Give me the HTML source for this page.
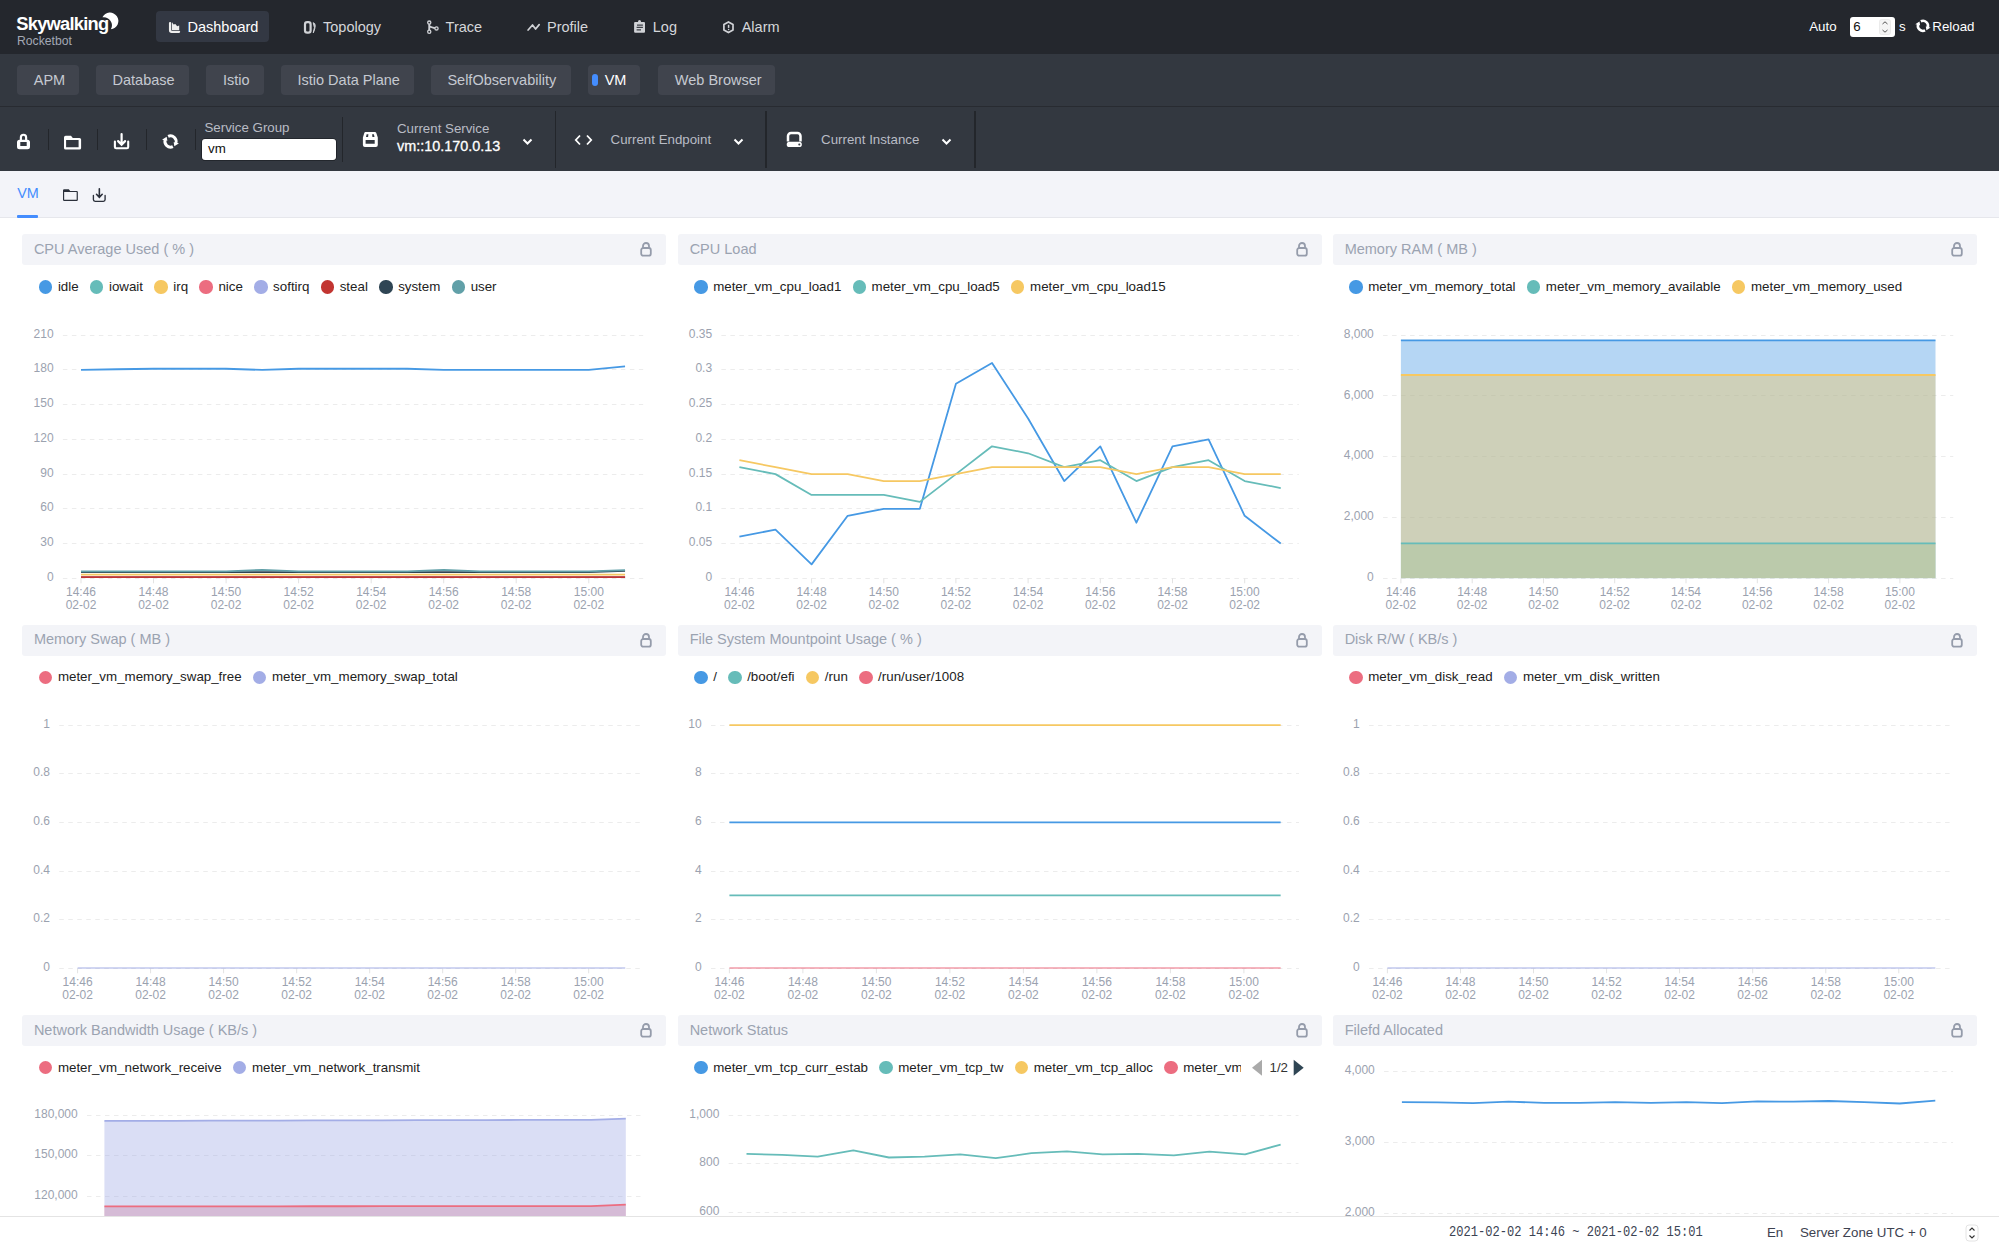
<!DOCTYPE html>
<html><head><meta charset="utf-8"><title>Skywalking Rocketbot</title>
<style>
html,body{margin:0;padding:0;}
body{width:1999px;height:1249px;overflow:hidden;position:relative;background:#ffffff;font-family:"Liberation Sans",sans-serif;}
.r{position:absolute;display:block;}
.t{position:absolute;white-space:nowrap;}
.lg{position:absolute;height:16px;display:flex;align-items:center;white-space:nowrap;font-size:13.33px;color:#222;}
.li{display:inline-flex;align-items:center;margin-right:11.4px;line-height:16px;}
.li i{display:inline-block;width:13.3px;height:13.3px;border-radius:50%;margin-right:5.6px;}
</style></head><body>
<div class="r" style="left:0px;top:0px;width:1999px;height:54px;background:#24272d;"></div>
<div class="t" style="left:16.30px;top:15.31px;font-size:18.3px;line-height:18.3px;color:#ffffff;font-weight:700;font-family:'Liberation Sans', sans-serif;letter-spacing:-0.75px;">Skywalking</div>
<svg class="r" style="left:0px;top:0px;" width="130" height="40" viewBox="0 0 130 40"><path d="M102.45 17.32 A8.4 8.4 0 1 1 110.88 29.35 A8.19 8.19 0 0 0 102.45 17.32 Z" fill="#fff"/></svg>
<div class="t" style="left:17.00px;top:35.17px;font-size:12.2px;line-height:12.2px;color:#a3a8b4;font-weight:400;font-family:'Liberation Sans', sans-serif;">Rocketbot</div>
<div class="r" style="left:156px;top:11px;width:113px;height:31px;background:#333843;border-radius:4px;"></div>
<svg class="r" style="left:160px;top:14px;" width="40" height="26" viewBox="0 0 40 26"><path d="M10.1 9.05 V16.3 Q10.1 17.8 11.6 17.8 H19.05" stroke="#eeeeee" stroke-width="2.3" fill="none" stroke-linecap="round"/><path d="M12 8.2 L13.6 10.5 L15.3 9.9 L17.2 12.3 L19.2 11.6 V16 H12 Z" fill="#eeeeee"/></svg>
<div class="t" style="left:187.50px;top:20.23px;font-size:14.5px;line-height:14.5px;color:#ffffff;font-weight:400;font-family:'Liberation Sans', sans-serif;">Dashboard</div>
<svg class="r" style="left:296px;top:14px;" width="40" height="26" viewBox="0 0 40 26"><rect x="9" y="8.2" width="5.6" height="10.5" rx="2.2" stroke="#d0d2d6" stroke-width="2.2" fill="none"/><path d="M17.2 8.7 Q21.2 9.5 17.3 18.8 Q19.6 13.5 17.2 8.7 Z" fill="#d0d2d6" stroke="#d0d2d6" stroke-width="1" stroke-linejoin="round"/></svg>
<div class="t" style="left:323.00px;top:20.23px;font-size:14.5px;line-height:14.5px;color:#d4d6da;font-weight:400;font-family:'Liberation Sans', sans-serif;">Topology</div>
<svg class="r" style="left:418px;top:14px;" width="40" height="26" viewBox="0 0 40 26"><path d="M11.25 8.5 V17.7 M11.4 12.2 Q12.5 13.4 18.5 14.4" stroke="#d0d2d6" stroke-width="1.9" fill="none"/><circle cx="11.25" cy="8.6" r="1.6" fill="#2a2d33" stroke="#d0d2d6" stroke-width="1.3"/><circle cx="11.25" cy="17.7" r="1.6" fill="#2a2d33" stroke="#d0d2d6" stroke-width="1.3"/><circle cx="18.5" cy="14.4" r="1.6" fill="#2a2d33" stroke="#d0d2d6" stroke-width="1.3"/></svg>
<div class="t" style="left:445.60px;top:20.23px;font-size:14.5px;line-height:14.5px;color:#d4d6da;font-weight:400;font-family:'Liberation Sans', sans-serif;">Trace</div>
<svg class="r" style="left:520px;top:14px;" width="40" height="26" viewBox="0 0 40 26"><path d="M8.1 16 L12.5 11 L15.6 15 L19.2 10.6" stroke="#d0d2d6" stroke-width="1.7" fill="none" stroke-linecap="round" stroke-linejoin="round"/></svg>
<div class="t" style="left:547.00px;top:20.23px;font-size:14.5px;line-height:14.5px;color:#d4d6da;font-weight:400;font-family:'Liberation Sans', sans-serif;">Profile</div>
<svg class="r" style="left:626px;top:14px;" width="40" height="26" viewBox="0 0 40 26"><rect x="8.1" y="7.9" width="10.9" height="10.85" rx="1.1" fill="#d0d2d6"/><circle cx="13.5" cy="7.6" r="1.5" fill="#d0d2d6"/><path d="M11 11.05 H16.9 M10.6 13.45 H16.9 M10.6 15.85 H15" stroke="#3b3e45" stroke-width="1.2"/></svg>
<div class="t" style="left:652.80px;top:20.23px;font-size:14.5px;line-height:14.5px;color:#d4d6da;font-weight:400;font-family:'Liberation Sans', sans-serif;">Log</div>
<svg class="r" style="left:715px;top:14px;" width="40" height="26" viewBox="0 0 40 26"><path d="M13.45 7.9 L18 10.5 V15.9 L13.45 18.6 L8.9 15.9 V10.5 Z" stroke="#d0d2d6" stroke-width="1.7" fill="none" stroke-linejoin="round"/><path d="M13.6 10.8 V13.9" stroke="#d0d2d6" stroke-width="1.5"/><circle cx="13.6" cy="15.4" r="0.75" fill="#d0d2d6"/></svg>
<div class="t" style="left:741.70px;top:20.23px;font-size:14.5px;line-height:14.5px;color:#d4d6da;font-weight:400;font-family:'Liberation Sans', sans-serif;">Alarm</div>
<div class="t" style="left:1809.20px;top:20.44px;font-size:13.3px;line-height:13.3px;color:#ffffff;font-weight:400;font-family:'Liberation Sans', sans-serif;">Auto</div>
<div class="r" style="left:1850.3px;top:16.75px;width:45px;height:20px;background:#ffffff;border-radius:3px;"></div>
<div class="t" style="left:1853.30px;top:20.24px;font-size:13.3px;line-height:13.3px;color:#111111;font-weight:400;font-family:'Liberation Sans', sans-serif;">6</div>
<svg class="r" style="left:1879px;top:19px;" width="12" height="16" viewBox="0 0 12 16"><rect x="0.5" y="0.5" width="11" height="15" rx="2" fill="#f4f4f4" stroke="#e0e0e0" stroke-width="0.6"/><path d="M3.5 5 L6 2.8 L8.5 5" stroke="#555" stroke-width="1" fill="none"/><path d="M3.5 11 L6 13.2 L8.5 11" stroke="#555" stroke-width="1" fill="none"/></svg>
<div class="t" style="left:1899.00px;top:20.44px;font-size:13.3px;line-height:13.3px;color:#ffffff;font-weight:400;font-family:'Liberation Sans', sans-serif;">s</div>
<svg class="r" style="left:1908.5px;top:11.4px" width="27" height="27" viewBox="0 0 30 30"><path d="M13.13 11.42 A5.6 5.6 0 0 1 20.76 18.42" stroke="#fff" stroke-width="2.9" fill="none"/><path d="M17.87 21.58 A5.6 5.6 0 0 1 10.24 14.58" stroke="#fff" stroke-width="2.9" fill="none"/><path d="M18.63 17.17 L24.0 18.25 L19.38 21.31 Z" fill="#fff"/><path d="M12.37 15.83 L7.0 14.75 L11.62 11.69 Z" fill="#fff"/></svg>
<div class="t" style="left:1932.30px;top:20.44px;font-size:13.3px;line-height:13.3px;color:#ffffff;font-weight:400;font-family:'Liberation Sans', sans-serif;">Reload</div>
<div class="r" style="left:0px;top:54px;width:1999px;height:52px;background:#333840;"></div>
<div class="r" style="left:0px;top:106px;width:1999px;height:1px;background:#282b31;"></div>
<div class="r" style="left:17px;top:65.2px;width:62px;height:29.4px;background:#40444d;border-radius:4px;"></div>
<div class="t" style="left:33.75px;top:73.03px;font-size:14.5px;line-height:14.5px;color:#c5c9d1;font-weight:400;font-family:'Liberation Sans', sans-serif;">APM</div>
<div class="r" style="left:96.25px;top:65.2px;width:93.0px;height:29.4px;background:#40444d;border-radius:4px;"></div>
<div class="t" style="left:112.50px;top:73.03px;font-size:14.5px;line-height:14.5px;color:#c5c9d1;font-weight:400;font-family:'Liberation Sans', sans-serif;">Database</div>
<div class="r" style="left:206.25px;top:65.2px;width:57.5px;height:29.4px;background:#40444d;border-radius:4px;"></div>
<div class="t" style="left:223.00px;top:73.03px;font-size:14.5px;line-height:14.5px;color:#c5c9d1;font-weight:400;font-family:'Liberation Sans', sans-serif;">Istio</div>
<div class="r" style="left:280.5px;top:65.2px;width:133.25px;height:29.4px;background:#40444d;border-radius:4px;"></div>
<div class="t" style="left:297.50px;top:73.03px;font-size:14.5px;line-height:14.5px;color:#c5c9d1;font-weight:400;font-family:'Liberation Sans', sans-serif;">Istio Data Plane</div>
<div class="r" style="left:431.25px;top:65.2px;width:139.75px;height:29.4px;background:#40444d;border-radius:4px;"></div>
<div class="t" style="left:447.40px;top:73.03px;font-size:14.5px;line-height:14.5px;color:#c5c9d1;font-weight:400;font-family:'Liberation Sans', sans-serif;">SelfObservability</div>
<div class="r" style="left:588.2px;top:65.2px;width:52.2px;height:29.4px;background:#40444d;border-radius:4px;"></div>
<div class="t" style="left:604.70px;top:73.03px;font-size:14.5px;line-height:14.5px;color:#ffffff;font-weight:400;font-family:'Liberation Sans', sans-serif;">VM</div>
<div class="r" style="left:657.8px;top:65.2px;width:117.7px;height:29.4px;background:#40444d;border-radius:4px;"></div>
<div class="t" style="left:674.80px;top:73.03px;font-size:14.5px;line-height:14.5px;color:#c5c9d1;font-weight:400;font-family:'Liberation Sans', sans-serif;">Web Browser</div>
<div class="r" style="left:592.2px;top:74.4px;width:6px;height:11.4px;background:#448dfe;border-radius:3px;"></div>
<div class="r" style="left:0px;top:107px;width:1999px;height:64.4px;background:#333840;"></div>
<svg class="r" style="left:8px;top:128px;" width="30" height="28" viewBox="0 0 30 28"><path fill-rule="evenodd" fill="#ffffff" d="M11.5 11.66 H19.5 A2.5 2.5 0 0 1 22 14.16 V18.8 A2.5 2.5 0 0 1 19.5 21.3 H11.5 A2.5 2.5 0 0 1 9 18.8 V14.16 A2.5 2.5 0 0 1 11.5 11.66 Z M12.3 13.9 V17.9 H18.7 V13.9 Z"/><path fill="#ffffff" d="M11.8 11.9 V9.4 A3.7 3.7 0 0 1 19.2 9.4 V11.9 H17.05 V9.4 A1.55 1.55 0 0 0 13.95 9.4 V11.9 Z"/></svg>
<div class="r" style="left:47.5px;top:129px;width:1.5px;height:20.5px;background:#23262b;"></div>
<div class="r" style="left:96.5px;top:129px;width:1.5px;height:20.5px;background:#23262b;"></div>
<div class="r" style="left:145.5px;top:129px;width:1.5px;height:20.5px;background:#23262b;"></div>
<div class="r" style="left:194.5px;top:129px;width:1.5px;height:20.5px;background:#23262b;"></div>
<svg class="r" style="left:58px;top:128px;" width="30" height="28" viewBox="0 0 30 28"><path fill-rule="evenodd" fill="#ffffff" d="M6 9.5 Q6 7.85 7.6 7.85 H13 L14.8 9.9 H21.5 Q23.1 9.9 23.1 11.5 V19.9 Q23.1 21.5 21.5 21.5 H7.6 Q6 21.5 6 19.9 Z M8.1 12.1 V19.3 H20.6 V12.1 Z"/></svg>
<svg class="r" style="left:107px;top:128px;" width="30" height="28" viewBox="0 0 30 28"><path d="M14.6 6 V16 M11.1 13.1 L14.6 16.6 L18.1 13.1" stroke="#ffffff" stroke-width="2.2" fill="none" stroke-linecap="round"/><path d="M7.9 13.5 V19 Q7.9 20.2 9.1 20.2 H20 Q21.2 20.2 21.2 19 V13.5" stroke="#ffffff" stroke-width="2.1" fill="none" stroke-linecap="round"/></svg>
<svg class="r" style="left:155px;top:125px;" width="30" height="30" viewBox="0 0 30 30"><path d="M13.13 11.42 A5.6 5.6 0 0 1 20.76 18.42" stroke="#ffffff" stroke-width="2.9" fill="none"/><path d="M17.87 21.58 A5.6 5.6 0 0 1 10.24 14.58" stroke="#ffffff" stroke-width="2.9" fill="none"/><path d="M18.63 17.17 L24.0 18.25 L19.38 21.31 Z" fill="#ffffff"/><path d="M12.37 15.83 L7.0 14.75 L11.62 11.69 Z" fill="#ffffff"/></svg>
<div class="t" style="left:204.50px;top:120.54px;font-size:13.3px;line-height:13.3px;color:#b9bcc5;font-weight:400;font-family:'Liberation Sans', sans-serif;">Service Group</div>
<div class="r" style="left:201.8px;top:138.5px;width:134.2px;height:21.3px;background:#ffffff;border-radius:3px;box-shadow:0 0 0 0.6px #15171b;"></div>
<div class="t" style="left:208.00px;top:142.24px;font-size:13.3px;line-height:13.3px;color:#111111;font-weight:400;font-family:'Liberation Sans', sans-serif;">vm</div>
<div class="r" style="left:341.8px;top:117px;width:1.6px;height:44.7px;background:#23262b;"></div>
<svg class="r" style="left:355px;top:125px;" width="30" height="30" viewBox="0 0 30 30"><path fill-rule="evenodd" fill="#ffffff" d="M10.3 7 H19.9 Q20.9 7 21.3 8 L22.8 12.5 V20 Q22.8 22 20.8 22 H9.9 Q7.9 22 7.9 20 V12.5 L9.3 8 Q9.7 7 10.3 7 Z M11.6 9.3 H13.4 L13.1 12 H11 Z M17.1 9.3 H18.9 L19.5 12 H17.4 Z M10.6 14.9 V18.75 H19.7 V14.9 Z"/></svg>
<div class="t" style="left:397.00px;top:122.14px;font-size:13.3px;line-height:13.3px;color:#b9bcc5;font-weight:400;font-family:'Liberation Sans', sans-serif;">Current Service</div>
<div class="t" style="left:397.00px;top:138.51px;font-size:14.4px;line-height:14.4px;color:#ffffff;font-weight:400;font-family:'Liberation Sans', sans-serif;-webkit-text-stroke:0.3px #fff;">vm::10.170.0.13</div>
<svg class="r" style="left:522px;top:137.5px;" width="11" height="8" viewBox="0 0 11 8"><path d="M1.5 1.5 L5.5 5.5 L9.5 1.5" stroke="#ffffff" stroke-width="2" fill="none"/></svg>
<div class="r" style="left:554.6px;top:110.5px;width:1.6px;height:57.8px;background:#23262b;"></div>
<svg class="r" style="left:574px;top:133.5px;" width="19" height="12" viewBox="0 0 19 12"><path d="M6 1.5 L1.8 6 L6 10.5 M13 1.5 L17.2 6 L13 10.5" stroke="#ffffff" stroke-width="1.8" fill="none"/></svg>
<div class="t" style="left:610.60px;top:132.74px;font-size:13.3px;line-height:13.3px;color:#b9bcc5;font-weight:400;font-family:'Liberation Sans', sans-serif;">Current Endpoint</div>
<svg class="r" style="left:732.5px;top:137.5px;" width="11" height="8" viewBox="0 0 11 8"><path d="M1.5 1.5 L5.5 5.5 L9.5 1.5" stroke="#ffffff" stroke-width="2" fill="none"/></svg>
<div class="r" style="left:765.4px;top:110.5px;width:1.6px;height:57.8px;background:#23262b;"></div>
<svg class="r" style="left:778px;top:125px;" width="30" height="30" viewBox="0 0 30 30"><path d="M10 16.4 V11 A3.05 3.05 0 0 1 13.05 7.95 H19.45 A3.05 3.05 0 0 1 22.5 11 V16.4" stroke="#ffffff" stroke-width="2.5" fill="none"/><rect x="8.74" y="16.8" width="15.1" height="5.3" rx="2.65" fill="#ffffff"/><circle cx="21.3" cy="19.45" r="1.05" fill="#333840"/></svg>
<div class="t" style="left:821.10px;top:132.74px;font-size:13.3px;line-height:13.3px;color:#b9bcc5;font-weight:400;font-family:'Liberation Sans', sans-serif;">Current Instance</div>
<svg class="r" style="left:941px;top:137.5px;" width="11" height="8" viewBox="0 0 11 8"><path d="M1.5 1.5 L5.5 5.5 L9.5 1.5" stroke="#ffffff" stroke-width="2" fill="none"/></svg>
<div class="r" style="left:974px;top:110.5px;width:1.6px;height:57.8px;background:#23262b;"></div>
<div class="r" style="left:0px;top:171.4px;width:1999px;height:46.1px;background:#f3f4f9;"></div>
<div class="r" style="left:0px;top:217.3px;width:1999px;height:1px;background:#e6e7ec;"></div>
<div class="t" style="left:17.20px;top:186.11px;font-size:14.4px;line-height:14.4px;color:#448dfe;font-weight:400;font-family:'Liberation Sans', sans-serif;">VM</div>
<div class="r" style="left:17px;top:215px;width:21.3px;height:2.5px;background:#448dfe;border-radius:1px;"></div>
<svg class="r" style="left:58px;top:182px;" width="54" height="26" viewBox="0 0 54 26"><path fill-rule="evenodd" fill="#2b303b" d="M5 8.3 Q5 7.16 6.2 7.16 H10.8 L12.2 8.9 H18.7 Q19.86 8.9 19.86 10.1 V17.7 Q19.86 18.9 18.7 18.9 H6.2 Q5 18.9 5 17.7 Z M6.15 10 V17.8 H18.65 V10 Z"/><path d="M41.35 6.8 V15.2 M38.5 12.3 L41.35 15.3 L44.2 12.3" stroke="#2b303b" stroke-width="1.6" fill="none" stroke-linecap="round"/><path d="M35.4 13.4 V17.6 Q35.4 19.3 37.1 19.3 H45.4 Q47.1 19.3 47.1 17.6 V13.4" stroke="#2b303b" stroke-width="1.35" fill="none" stroke-linecap="round"/></svg>
<svg class="r" style="left:0;top:0;font-family:'Liberation Sans',sans-serif" width="1999" height="1249" viewBox="0 0 1999 1249">
<line x1="62.9" y1="578.5" x2="643.2" y2="578.5" stroke="#ececec" stroke-width="1" stroke-dasharray="4.5 4.5"/>
<text x="53.6" y="580.8" text-anchor="end" font-size="12" fill="#9ba2af">0</text>
<line x1="62.9" y1="543.5" x2="643.2" y2="543.5" stroke="#ececec" stroke-width="1" stroke-dasharray="4.5 4.5"/>
<text x="53.6" y="546.1" text-anchor="end" font-size="12" fill="#9ba2af">30</text>
<line x1="62.9" y1="508.5" x2="643.2" y2="508.5" stroke="#ececec" stroke-width="1" stroke-dasharray="4.5 4.5"/>
<text x="53.6" y="511.3" text-anchor="end" font-size="12" fill="#9ba2af">60</text>
<line x1="62.9" y1="474.5" x2="643.2" y2="474.5" stroke="#ececec" stroke-width="1" stroke-dasharray="4.5 4.5"/>
<text x="53.6" y="476.6" text-anchor="end" font-size="12" fill="#9ba2af">90</text>
<line x1="62.9" y1="439.5" x2="643.2" y2="439.5" stroke="#ececec" stroke-width="1" stroke-dasharray="4.5 4.5"/>
<text x="53.6" y="441.9" text-anchor="end" font-size="12" fill="#9ba2af">120</text>
<line x1="62.9" y1="404.5" x2="643.2" y2="404.5" stroke="#ececec" stroke-width="1" stroke-dasharray="4.5 4.5"/>
<text x="53.6" y="407.2" text-anchor="end" font-size="12" fill="#9ba2af">150</text>
<line x1="62.9" y1="369.5" x2="643.2" y2="369.5" stroke="#ececec" stroke-width="1" stroke-dasharray="4.5 4.5"/>
<text x="53.6" y="372.4" text-anchor="end" font-size="12" fill="#9ba2af">180</text>
<line x1="62.9" y1="335.5" x2="643.2" y2="335.5" stroke="#ececec" stroke-width="1" stroke-dasharray="4.5 4.5"/>
<text x="53.6" y="337.7" text-anchor="end" font-size="12" fill="#9ba2af">210</text>
<line x1="81.0" y1="578.3" x2="81.0" y2="583.3" stroke="#e3e3e3" stroke-width="1"/>
<text x="81.0" y="596.1" text-anchor="middle" font-size="12" fill="#9ba2af">14:46</text>
<text x="81.0" y="609.3" text-anchor="middle" font-size="12" fill="#9ba2af">02-02</text>
<line x1="153.5" y1="578.3" x2="153.5" y2="583.3" stroke="#e3e3e3" stroke-width="1"/>
<text x="153.5" y="596.1" text-anchor="middle" font-size="12" fill="#9ba2af">14:48</text>
<text x="153.5" y="609.3" text-anchor="middle" font-size="12" fill="#9ba2af">02-02</text>
<line x1="226.1" y1="578.3" x2="226.1" y2="583.3" stroke="#e3e3e3" stroke-width="1"/>
<text x="226.1" y="596.1" text-anchor="middle" font-size="12" fill="#9ba2af">14:50</text>
<text x="226.1" y="609.3" text-anchor="middle" font-size="12" fill="#9ba2af">02-02</text>
<line x1="298.6" y1="578.3" x2="298.6" y2="583.3" stroke="#e3e3e3" stroke-width="1"/>
<text x="298.6" y="596.1" text-anchor="middle" font-size="12" fill="#9ba2af">14:52</text>
<text x="298.6" y="609.3" text-anchor="middle" font-size="12" fill="#9ba2af">02-02</text>
<line x1="371.2" y1="578.3" x2="371.2" y2="583.3" stroke="#e3e3e3" stroke-width="1"/>
<text x="371.2" y="596.1" text-anchor="middle" font-size="12" fill="#9ba2af">14:54</text>
<text x="371.2" y="609.3" text-anchor="middle" font-size="12" fill="#9ba2af">02-02</text>
<line x1="443.7" y1="578.3" x2="443.7" y2="583.3" stroke="#e3e3e3" stroke-width="1"/>
<text x="443.7" y="596.1" text-anchor="middle" font-size="12" fill="#9ba2af">14:56</text>
<text x="443.7" y="609.3" text-anchor="middle" font-size="12" fill="#9ba2af">02-02</text>
<line x1="516.2" y1="578.3" x2="516.2" y2="583.3" stroke="#e3e3e3" stroke-width="1"/>
<text x="516.2" y="596.1" text-anchor="middle" font-size="12" fill="#9ba2af">14:58</text>
<text x="516.2" y="609.3" text-anchor="middle" font-size="12" fill="#9ba2af">02-02</text>
<line x1="588.8" y1="578.3" x2="588.8" y2="583.3" stroke="#e3e3e3" stroke-width="1"/>
<text x="588.8" y="596.1" text-anchor="middle" font-size="12" fill="#9ba2af">15:00</text>
<text x="588.8" y="609.3" text-anchor="middle" font-size="12" fill="#9ba2af">02-02</text>
<clipPath id="c81_578"><rect x="52.9" y="325.2" width="600.3" height="253.4"/></clipPath><g clip-path="url(#c81_578)">
<polyline points="81.00,369.93 117.27,369.23 153.54,368.77 189.81,368.77 226.08,368.77 262.35,369.93 298.62,368.77 334.89,368.77 371.16,368.77 407.43,368.77 443.70,369.93 479.97,369.93 516.24,369.93 552.51,369.93 588.78,369.93 625.05,366.46" fill="none" stroke="#4699e4" stroke-width="1.8" stroke-linejoin="round" stroke-linecap="butt"/>
<polyline points="81.00,577.14 117.27,577.14 153.54,577.14 189.81,577.14 226.08,577.14 262.35,577.14 298.62,577.14 334.89,577.14 371.16,577.14 407.43,577.14 443.70,577.14 479.97,577.14 516.24,577.14 552.51,577.14 588.78,577.14 625.05,577.14" fill="none" stroke="#66bcb9" stroke-width="1.8" stroke-linejoin="round" stroke-linecap="butt"/>
<polyline points="81.00,574.60 117.27,574.60 153.54,574.60 189.81,574.60 226.08,574.60 262.35,574.60 298.62,574.60 334.89,574.60 371.16,574.60 407.43,574.60 443.70,574.60 479.97,574.60 516.24,574.60 552.51,574.60 588.78,574.60 625.05,574.60" fill="none" stroke="#f6c862" stroke-width="1.8" stroke-linejoin="round" stroke-linecap="butt"/>
<polyline points="81.00,577.14 117.27,577.14 153.54,577.14 189.81,577.14 226.08,577.14 262.35,577.14 298.62,577.14 334.89,577.14 371.16,577.14 407.43,577.14 443.70,577.14 479.97,577.14 516.24,577.14 552.51,577.14 588.78,577.14 625.05,577.14" fill="none" stroke="#ec6d80" stroke-width="1.8" stroke-linejoin="round" stroke-linecap="butt"/>
<polyline points="81.00,577.14 117.27,577.14 153.54,577.14 189.81,577.14 226.08,577.14 262.35,577.14 298.62,577.14 334.89,577.14 371.16,577.14 407.43,577.14 443.70,577.14 479.97,577.14 516.24,577.14 552.51,577.14 588.78,577.14 625.05,577.14" fill="none" stroke="#a3ade6" stroke-width="1.8" stroke-linejoin="round" stroke-linecap="butt"/>
<polyline points="81.00,577.14 117.27,577.14 153.54,577.14 189.81,577.14 226.08,577.14 262.35,577.14 298.62,577.14 334.89,577.14 371.16,577.14 407.43,577.14 443.70,577.14 479.97,577.14 516.24,577.14 552.51,577.14 588.78,577.14 625.05,577.14" fill="none" stroke="#c23531" stroke-width="1.8" stroke-linejoin="round" stroke-linecap="butt"/>
<polyline points="81.00,572.05 117.27,572.05 153.54,572.05 189.81,572.05 226.08,572.05 262.35,572.05 298.62,572.05 334.89,572.05 371.16,572.05 407.43,572.05 443.70,572.05 479.97,572.05 516.24,572.05 552.51,572.05 588.78,572.05 625.05,570.89" fill="none" stroke="#2f4554" stroke-width="1.8" stroke-linejoin="round" stroke-linecap="butt"/>
<polyline points="81.00,571.35 117.27,571.35 153.54,571.35 189.81,571.35 226.08,571.35 262.35,569.85 298.62,571.35 334.89,571.35 371.16,571.35 407.43,571.35 443.70,569.85 479.97,571.35 516.24,571.35 552.51,571.35 588.78,571.35 625.05,570.20" fill="none" stroke="#61a0a8" stroke-width="1.8" stroke-linejoin="round" stroke-linecap="butt"/>
</g>
<line x1="721.4" y1="578.5" x2="1298.8" y2="578.5" stroke="#ececec" stroke-width="1" stroke-dasharray="4.5 4.5"/>
<text x="712.1" y="580.8" text-anchor="end" font-size="12" fill="#9ba2af">0</text>
<line x1="721.4" y1="543.5" x2="1298.8" y2="543.5" stroke="#ececec" stroke-width="1" stroke-dasharray="4.5 4.5"/>
<text x="712.1" y="546.1" text-anchor="end" font-size="12" fill="#9ba2af">0.05</text>
<line x1="721.4" y1="508.5" x2="1298.8" y2="508.5" stroke="#ececec" stroke-width="1" stroke-dasharray="4.5 4.5"/>
<text x="712.1" y="511.3" text-anchor="end" font-size="12" fill="#9ba2af">0.1</text>
<line x1="721.4" y1="474.5" x2="1298.8" y2="474.5" stroke="#ececec" stroke-width="1" stroke-dasharray="4.5 4.5"/>
<text x="712.1" y="476.6" text-anchor="end" font-size="12" fill="#9ba2af">0.15</text>
<line x1="721.4" y1="439.5" x2="1298.8" y2="439.5" stroke="#ececec" stroke-width="1" stroke-dasharray="4.5 4.5"/>
<text x="712.1" y="441.9" text-anchor="end" font-size="12" fill="#9ba2af">0.2</text>
<line x1="721.4" y1="404.5" x2="1298.8" y2="404.5" stroke="#ececec" stroke-width="1" stroke-dasharray="4.5 4.5"/>
<text x="712.1" y="407.2" text-anchor="end" font-size="12" fill="#9ba2af">0.25</text>
<line x1="721.4" y1="369.5" x2="1298.8" y2="369.5" stroke="#ececec" stroke-width="1" stroke-dasharray="4.5 4.5"/>
<text x="712.1" y="372.4" text-anchor="end" font-size="12" fill="#9ba2af">0.3</text>
<line x1="721.4" y1="335.5" x2="1298.8" y2="335.5" stroke="#ececec" stroke-width="1" stroke-dasharray="4.5 4.5"/>
<text x="712.1" y="337.7" text-anchor="end" font-size="12" fill="#9ba2af">0.35</text>
<line x1="739.4" y1="578.3" x2="739.4" y2="583.3" stroke="#e3e3e3" stroke-width="1"/>
<text x="739.4" y="596.1" text-anchor="middle" font-size="12" fill="#9ba2af">14:46</text>
<text x="739.4" y="609.3" text-anchor="middle" font-size="12" fill="#9ba2af">02-02</text>
<line x1="811.6" y1="578.3" x2="811.6" y2="583.3" stroke="#e3e3e3" stroke-width="1"/>
<text x="811.6" y="596.1" text-anchor="middle" font-size="12" fill="#9ba2af">14:48</text>
<text x="811.6" y="609.3" text-anchor="middle" font-size="12" fill="#9ba2af">02-02</text>
<line x1="883.8" y1="578.3" x2="883.8" y2="583.3" stroke="#e3e3e3" stroke-width="1"/>
<text x="883.8" y="596.1" text-anchor="middle" font-size="12" fill="#9ba2af">14:50</text>
<text x="883.8" y="609.3" text-anchor="middle" font-size="12" fill="#9ba2af">02-02</text>
<line x1="955.9" y1="578.3" x2="955.9" y2="583.3" stroke="#e3e3e3" stroke-width="1"/>
<text x="955.9" y="596.1" text-anchor="middle" font-size="12" fill="#9ba2af">14:52</text>
<text x="955.9" y="609.3" text-anchor="middle" font-size="12" fill="#9ba2af">02-02</text>
<line x1="1028.1" y1="578.3" x2="1028.1" y2="583.3" stroke="#e3e3e3" stroke-width="1"/>
<text x="1028.1" y="596.1" text-anchor="middle" font-size="12" fill="#9ba2af">14:54</text>
<text x="1028.1" y="609.3" text-anchor="middle" font-size="12" fill="#9ba2af">02-02</text>
<line x1="1100.3" y1="578.3" x2="1100.3" y2="583.3" stroke="#e3e3e3" stroke-width="1"/>
<text x="1100.3" y="596.1" text-anchor="middle" font-size="12" fill="#9ba2af">14:56</text>
<text x="1100.3" y="609.3" text-anchor="middle" font-size="12" fill="#9ba2af">02-02</text>
<line x1="1172.5" y1="578.3" x2="1172.5" y2="583.3" stroke="#e3e3e3" stroke-width="1"/>
<text x="1172.5" y="596.1" text-anchor="middle" font-size="12" fill="#9ba2af">14:58</text>
<text x="1172.5" y="609.3" text-anchor="middle" font-size="12" fill="#9ba2af">02-02</text>
<line x1="1244.7" y1="578.3" x2="1244.7" y2="583.3" stroke="#e3e3e3" stroke-width="1"/>
<text x="1244.7" y="596.1" text-anchor="middle" font-size="12" fill="#9ba2af">15:00</text>
<text x="1244.7" y="609.3" text-anchor="middle" font-size="12" fill="#9ba2af">02-02</text>
<clipPath id="c739_578"><rect x="711.4" y="325.2" width="597.4" height="253.4"/></clipPath><g clip-path="url(#c739_578)">
<polyline points="739.40,536.63 775.49,529.68 811.58,564.41 847.67,515.79 883.76,508.84 919.85,508.84 955.94,383.82 992.03,362.98 1028.12,418.55 1064.21,481.06 1100.30,446.33 1136.39,522.73 1172.48,446.33 1208.57,439.39 1244.66,515.79 1280.75,543.57" fill="none" stroke="#4699e4" stroke-width="1.8" stroke-linejoin="round" stroke-linecap="butt"/>
<polyline points="739.40,467.17 775.49,474.11 811.58,494.95 847.67,494.95 883.76,494.95 919.85,501.90 955.94,474.11 992.03,446.33 1028.12,453.28 1064.21,467.17 1100.30,460.22 1136.39,481.06 1172.48,467.17 1208.57,460.22 1244.66,481.06 1280.75,488.01" fill="none" stroke="#66bcb9" stroke-width="1.8" stroke-linejoin="round" stroke-linecap="butt"/>
<polyline points="739.40,460.22 775.49,467.17 811.58,474.11 847.67,474.11 883.76,481.06 919.85,481.06 955.94,474.11 992.03,467.17 1028.12,467.17 1064.21,467.17 1100.30,467.17 1136.39,474.11 1172.48,467.17 1208.57,467.17 1244.66,474.11 1280.75,474.11" fill="none" stroke="#f6c862" stroke-width="1.8" stroke-linejoin="round" stroke-linecap="butt"/>
</g>
<line x1="1383.1" y1="578.5" x2="1953.3" y2="578.5" stroke="#ececec" stroke-width="1" stroke-dasharray="4.5 4.5"/>
<text x="1373.8" y="580.8" text-anchor="end" font-size="12" fill="#9ba2af">0</text>
<line x1="1383.1" y1="517.5" x2="1953.3" y2="517.5" stroke="#ececec" stroke-width="1" stroke-dasharray="4.5 4.5"/>
<text x="1373.8" y="520.0" text-anchor="end" font-size="12" fill="#9ba2af">2,000</text>
<line x1="1383.1" y1="456.5" x2="1953.3" y2="456.5" stroke="#ececec" stroke-width="1" stroke-dasharray="4.5 4.5"/>
<text x="1373.8" y="459.2" text-anchor="end" font-size="12" fill="#9ba2af">4,000</text>
<line x1="1383.1" y1="395.5" x2="1953.3" y2="395.5" stroke="#ececec" stroke-width="1" stroke-dasharray="4.5 4.5"/>
<text x="1373.8" y="398.5" text-anchor="end" font-size="12" fill="#9ba2af">6,000</text>
<line x1="1383.1" y1="335.5" x2="1953.3" y2="335.5" stroke="#ececec" stroke-width="1" stroke-dasharray="4.5 4.5"/>
<text x="1373.8" y="337.7" text-anchor="end" font-size="12" fill="#9ba2af">8,000</text>
<line x1="1400.9" y1="578.3" x2="1400.9" y2="583.3" stroke="#e3e3e3" stroke-width="1"/>
<text x="1400.9" y="596.1" text-anchor="middle" font-size="12" fill="#9ba2af">14:46</text>
<text x="1400.9" y="609.3" text-anchor="middle" font-size="12" fill="#9ba2af">02-02</text>
<line x1="1472.2" y1="578.3" x2="1472.2" y2="583.3" stroke="#e3e3e3" stroke-width="1"/>
<text x="1472.2" y="596.1" text-anchor="middle" font-size="12" fill="#9ba2af">14:48</text>
<text x="1472.2" y="609.3" text-anchor="middle" font-size="12" fill="#9ba2af">02-02</text>
<line x1="1543.5" y1="578.3" x2="1543.5" y2="583.3" stroke="#e3e3e3" stroke-width="1"/>
<text x="1543.5" y="596.1" text-anchor="middle" font-size="12" fill="#9ba2af">14:50</text>
<text x="1543.5" y="609.3" text-anchor="middle" font-size="12" fill="#9ba2af">02-02</text>
<line x1="1614.7" y1="578.3" x2="1614.7" y2="583.3" stroke="#e3e3e3" stroke-width="1"/>
<text x="1614.7" y="596.1" text-anchor="middle" font-size="12" fill="#9ba2af">14:52</text>
<text x="1614.7" y="609.3" text-anchor="middle" font-size="12" fill="#9ba2af">02-02</text>
<line x1="1686.0" y1="578.3" x2="1686.0" y2="583.3" stroke="#e3e3e3" stroke-width="1"/>
<text x="1686.0" y="596.1" text-anchor="middle" font-size="12" fill="#9ba2af">14:54</text>
<text x="1686.0" y="609.3" text-anchor="middle" font-size="12" fill="#9ba2af">02-02</text>
<line x1="1757.3" y1="578.3" x2="1757.3" y2="583.3" stroke="#e3e3e3" stroke-width="1"/>
<text x="1757.3" y="596.1" text-anchor="middle" font-size="12" fill="#9ba2af">14:56</text>
<text x="1757.3" y="609.3" text-anchor="middle" font-size="12" fill="#9ba2af">02-02</text>
<line x1="1828.6" y1="578.3" x2="1828.6" y2="583.3" stroke="#e3e3e3" stroke-width="1"/>
<text x="1828.6" y="596.1" text-anchor="middle" font-size="12" fill="#9ba2af">14:58</text>
<text x="1828.6" y="609.3" text-anchor="middle" font-size="12" fill="#9ba2af">02-02</text>
<line x1="1899.9" y1="578.3" x2="1899.9" y2="583.3" stroke="#e3e3e3" stroke-width="1"/>
<text x="1899.9" y="596.1" text-anchor="middle" font-size="12" fill="#9ba2af">15:00</text>
<text x="1899.9" y="609.3" text-anchor="middle" font-size="12" fill="#9ba2af">02-02</text>
<clipPath id="c1400_578"><rect x="1373.1" y="325.2" width="590.2" height="253.4"/></clipPath><g clip-path="url(#c1400_578)">
<polygon points="1400.90,578.3 1400.90,340.37 1436.54,340.37 1472.18,340.37 1507.82,340.37 1543.46,340.37 1579.10,340.37 1614.74,340.37 1650.38,340.37 1686.02,340.37 1721.66,340.37 1757.30,340.37 1792.94,340.37 1828.58,340.37 1864.22,340.37 1899.86,340.37 1935.50,340.37 1935.50,578.3" fill="#4699e4" fill-opacity="0.4"/>
<polygon points="1400.90,578.3 1400.90,543.35 1436.54,543.35 1472.18,543.35 1507.82,543.35 1543.46,543.35 1579.10,543.35 1614.74,543.35 1650.38,543.35 1686.02,543.35 1721.66,543.35 1757.30,543.35 1792.94,543.35 1828.58,543.35 1864.22,543.35 1899.86,543.35 1935.50,543.35 1935.50,578.3" fill="#66bcb9" fill-opacity="0.4"/>
<polygon points="1400.90,578.3 1400.90,375.01 1436.54,375.01 1472.18,375.01 1507.82,375.01 1543.46,375.01 1579.10,375.01 1614.74,375.01 1650.38,375.01 1686.02,375.01 1721.66,375.01 1757.30,375.01 1792.94,375.01 1828.58,375.01 1864.22,375.01 1899.86,375.01 1935.50,375.01 1935.50,578.3" fill="#f6c862" fill-opacity="0.4"/>
<polyline points="1400.90,340.37 1436.54,340.37 1472.18,340.37 1507.82,340.37 1543.46,340.37 1579.10,340.37 1614.74,340.37 1650.38,340.37 1686.02,340.37 1721.66,340.37 1757.30,340.37 1792.94,340.37 1828.58,340.37 1864.22,340.37 1899.86,340.37 1935.50,340.37" fill="none" stroke="#4699e4" stroke-width="1.8" stroke-linejoin="round" stroke-linecap="butt"/>
<polyline points="1400.90,543.35 1436.54,543.35 1472.18,543.35 1507.82,543.35 1543.46,543.35 1579.10,543.35 1614.74,543.35 1650.38,543.35 1686.02,543.35 1721.66,543.35 1757.30,543.35 1792.94,543.35 1828.58,543.35 1864.22,543.35 1899.86,543.35 1935.50,543.35" fill="none" stroke="#66bcb9" stroke-width="1.8" stroke-linejoin="round" stroke-linecap="butt"/>
<polyline points="1400.90,375.01 1436.54,375.01 1472.18,375.01 1507.82,375.01 1543.46,375.01 1579.10,375.01 1614.74,375.01 1650.38,375.01 1686.02,375.01 1721.66,375.01 1757.30,375.01 1792.94,375.01 1828.58,375.01 1864.22,375.01 1899.86,375.01 1935.50,375.01" fill="none" stroke="#f6c862" stroke-width="1.8" stroke-linejoin="round" stroke-linecap="butt"/>
</g>
<line x1="59.3" y1="968.5" x2="643.5" y2="968.5" stroke="#ececec" stroke-width="1" stroke-dasharray="4.5 4.5"/>
<text x="50.0" y="970.8" text-anchor="end" font-size="12" fill="#9ba2af">0</text>
<line x1="59.3" y1="919.5" x2="643.5" y2="919.5" stroke="#ececec" stroke-width="1" stroke-dasharray="4.5 4.5"/>
<text x="50.0" y="922.2" text-anchor="end" font-size="12" fill="#9ba2af">0.2</text>
<line x1="59.3" y1="871.5" x2="643.5" y2="871.5" stroke="#ececec" stroke-width="1" stroke-dasharray="4.5 4.5"/>
<text x="50.0" y="873.6" text-anchor="end" font-size="12" fill="#9ba2af">0.4</text>
<line x1="59.3" y1="822.5" x2="643.5" y2="822.5" stroke="#ececec" stroke-width="1" stroke-dasharray="4.5 4.5"/>
<text x="50.0" y="824.9" text-anchor="end" font-size="12" fill="#9ba2af">0.6</text>
<line x1="59.3" y1="773.5" x2="643.5" y2="773.5" stroke="#ececec" stroke-width="1" stroke-dasharray="4.5 4.5"/>
<text x="50.0" y="776.3" text-anchor="end" font-size="12" fill="#9ba2af">0.8</text>
<line x1="59.3" y1="725.5" x2="643.5" y2="725.5" stroke="#ececec" stroke-width="1" stroke-dasharray="4.5 4.5"/>
<text x="50.0" y="727.7" text-anchor="end" font-size="12" fill="#9ba2af">1</text>
<line x1="77.6" y1="968.3" x2="77.6" y2="973.3" stroke="#e3e3e3" stroke-width="1"/>
<text x="77.6" y="986.1" text-anchor="middle" font-size="12" fill="#9ba2af">14:46</text>
<text x="77.6" y="999.3" text-anchor="middle" font-size="12" fill="#9ba2af">02-02</text>
<line x1="150.6" y1="968.3" x2="150.6" y2="973.3" stroke="#e3e3e3" stroke-width="1"/>
<text x="150.6" y="986.1" text-anchor="middle" font-size="12" fill="#9ba2af">14:48</text>
<text x="150.6" y="999.3" text-anchor="middle" font-size="12" fill="#9ba2af">02-02</text>
<line x1="223.6" y1="968.3" x2="223.6" y2="973.3" stroke="#e3e3e3" stroke-width="1"/>
<text x="223.6" y="986.1" text-anchor="middle" font-size="12" fill="#9ba2af">14:50</text>
<text x="223.6" y="999.3" text-anchor="middle" font-size="12" fill="#9ba2af">02-02</text>
<line x1="296.7" y1="968.3" x2="296.7" y2="973.3" stroke="#e3e3e3" stroke-width="1"/>
<text x="296.7" y="986.1" text-anchor="middle" font-size="12" fill="#9ba2af">14:52</text>
<text x="296.7" y="999.3" text-anchor="middle" font-size="12" fill="#9ba2af">02-02</text>
<line x1="369.7" y1="968.3" x2="369.7" y2="973.3" stroke="#e3e3e3" stroke-width="1"/>
<text x="369.7" y="986.1" text-anchor="middle" font-size="12" fill="#9ba2af">14:54</text>
<text x="369.7" y="999.3" text-anchor="middle" font-size="12" fill="#9ba2af">02-02</text>
<line x1="442.7" y1="968.3" x2="442.7" y2="973.3" stroke="#e3e3e3" stroke-width="1"/>
<text x="442.7" y="986.1" text-anchor="middle" font-size="12" fill="#9ba2af">14:56</text>
<text x="442.7" y="999.3" text-anchor="middle" font-size="12" fill="#9ba2af">02-02</text>
<line x1="515.7" y1="968.3" x2="515.7" y2="973.3" stroke="#e3e3e3" stroke-width="1"/>
<text x="515.7" y="986.1" text-anchor="middle" font-size="12" fill="#9ba2af">14:58</text>
<text x="515.7" y="999.3" text-anchor="middle" font-size="12" fill="#9ba2af">02-02</text>
<line x1="588.7" y1="968.3" x2="588.7" y2="973.3" stroke="#e3e3e3" stroke-width="1"/>
<text x="588.7" y="986.1" text-anchor="middle" font-size="12" fill="#9ba2af">15:00</text>
<text x="588.7" y="999.3" text-anchor="middle" font-size="12" fill="#9ba2af">02-02</text>
<clipPath id="c77_968"><rect x="49.3" y="715.2" width="604.2" height="253.4"/></clipPath><g clip-path="url(#c77_968)">
<polyline points="77.60,968.30 114.11,968.30 150.62,968.30 187.13,968.30 223.64,968.30 260.15,968.30 296.66,968.30 333.17,968.30 369.68,968.30 406.19,968.30 442.70,968.30 479.21,968.30 515.72,968.30 552.23,968.30 588.74,968.30 625.25,968.30" fill="none" stroke="#a3ade6" stroke-width="1.8" stroke-linejoin="round" stroke-linecap="butt"/>
</g>
<line x1="711.0" y1="968.5" x2="1299.0" y2="968.5" stroke="#ececec" stroke-width="1" stroke-dasharray="4.5 4.5"/>
<text x="701.7" y="970.8" text-anchor="end" font-size="12" fill="#9ba2af">0</text>
<line x1="711.0" y1="919.5" x2="1299.0" y2="919.5" stroke="#ececec" stroke-width="1" stroke-dasharray="4.5 4.5"/>
<text x="701.7" y="922.2" text-anchor="end" font-size="12" fill="#9ba2af">2</text>
<line x1="711.0" y1="871.5" x2="1299.0" y2="871.5" stroke="#ececec" stroke-width="1" stroke-dasharray="4.5 4.5"/>
<text x="701.7" y="873.6" text-anchor="end" font-size="12" fill="#9ba2af">4</text>
<line x1="711.0" y1="822.5" x2="1299.0" y2="822.5" stroke="#ececec" stroke-width="1" stroke-dasharray="4.5 4.5"/>
<text x="701.7" y="824.9" text-anchor="end" font-size="12" fill="#9ba2af">6</text>
<line x1="711.0" y1="773.5" x2="1299.0" y2="773.5" stroke="#ececec" stroke-width="1" stroke-dasharray="4.5 4.5"/>
<text x="701.7" y="776.3" text-anchor="end" font-size="12" fill="#9ba2af">8</text>
<line x1="711.0" y1="725.5" x2="1299.0" y2="725.5" stroke="#ececec" stroke-width="1" stroke-dasharray="4.5 4.5"/>
<text x="701.7" y="727.7" text-anchor="end" font-size="12" fill="#9ba2af">10</text>
<line x1="729.4" y1="968.3" x2="729.4" y2="973.3" stroke="#e3e3e3" stroke-width="1"/>
<text x="729.4" y="986.1" text-anchor="middle" font-size="12" fill="#9ba2af">14:46</text>
<text x="729.4" y="999.3" text-anchor="middle" font-size="12" fill="#9ba2af">02-02</text>
<line x1="802.9" y1="968.3" x2="802.9" y2="973.3" stroke="#e3e3e3" stroke-width="1"/>
<text x="802.9" y="986.1" text-anchor="middle" font-size="12" fill="#9ba2af">14:48</text>
<text x="802.9" y="999.3" text-anchor="middle" font-size="12" fill="#9ba2af">02-02</text>
<line x1="876.4" y1="968.3" x2="876.4" y2="973.3" stroke="#e3e3e3" stroke-width="1"/>
<text x="876.4" y="986.1" text-anchor="middle" font-size="12" fill="#9ba2af">14:50</text>
<text x="876.4" y="999.3" text-anchor="middle" font-size="12" fill="#9ba2af">02-02</text>
<line x1="949.9" y1="968.3" x2="949.9" y2="973.3" stroke="#e3e3e3" stroke-width="1"/>
<text x="949.9" y="986.1" text-anchor="middle" font-size="12" fill="#9ba2af">14:52</text>
<text x="949.9" y="999.3" text-anchor="middle" font-size="12" fill="#9ba2af">02-02</text>
<line x1="1023.4" y1="968.3" x2="1023.4" y2="973.3" stroke="#e3e3e3" stroke-width="1"/>
<text x="1023.4" y="986.1" text-anchor="middle" font-size="12" fill="#9ba2af">14:54</text>
<text x="1023.4" y="999.3" text-anchor="middle" font-size="12" fill="#9ba2af">02-02</text>
<line x1="1096.9" y1="968.3" x2="1096.9" y2="973.3" stroke="#e3e3e3" stroke-width="1"/>
<text x="1096.9" y="986.1" text-anchor="middle" font-size="12" fill="#9ba2af">14:56</text>
<text x="1096.9" y="999.3" text-anchor="middle" font-size="12" fill="#9ba2af">02-02</text>
<line x1="1170.4" y1="968.3" x2="1170.4" y2="973.3" stroke="#e3e3e3" stroke-width="1"/>
<text x="1170.4" y="986.1" text-anchor="middle" font-size="12" fill="#9ba2af">14:58</text>
<text x="1170.4" y="999.3" text-anchor="middle" font-size="12" fill="#9ba2af">02-02</text>
<line x1="1243.9" y1="968.3" x2="1243.9" y2="973.3" stroke="#e3e3e3" stroke-width="1"/>
<text x="1243.9" y="986.1" text-anchor="middle" font-size="12" fill="#9ba2af">15:00</text>
<text x="1243.9" y="999.3" text-anchor="middle" font-size="12" fill="#9ba2af">02-02</text>
<clipPath id="c729_968"><rect x="701.0" y="715.2" width="608.0" height="253.4"/></clipPath><g clip-path="url(#c729_968)">
<polyline points="729.40,822.44 766.15,822.44 802.90,822.44 839.65,822.44 876.40,822.44 913.15,822.44 949.90,822.44 986.65,822.44 1023.40,822.44 1060.15,822.44 1096.90,822.44 1133.65,822.44 1170.40,822.44 1207.15,822.44 1243.90,822.44 1280.65,822.44" fill="none" stroke="#4699e4" stroke-width="1.8" stroke-linejoin="round" stroke-linecap="butt"/>
<polyline points="729.40,895.37 766.15,895.37 802.90,895.37 839.65,895.37 876.40,895.37 913.15,895.37 949.90,895.37 986.65,895.37 1023.40,895.37 1060.15,895.37 1096.90,895.37 1133.65,895.37 1170.40,895.37 1207.15,895.37 1243.90,895.37 1280.65,895.37" fill="none" stroke="#66bcb9" stroke-width="1.8" stroke-linejoin="round" stroke-linecap="butt"/>
<polyline points="729.40,725.20 766.15,725.20 802.90,725.20 839.65,725.20 876.40,725.20 913.15,725.20 949.90,725.20 986.65,725.20 1023.40,725.20 1060.15,725.20 1096.90,725.20 1133.65,725.20 1170.40,725.20 1207.15,725.20 1243.90,725.20 1280.65,725.20" fill="none" stroke="#f6c862" stroke-width="1.8" stroke-linejoin="round" stroke-linecap="butt"/>
<polyline points="729.40,968.30 766.15,968.30 802.90,968.30 839.65,968.30 876.40,968.30 913.15,968.30 949.90,968.30 986.65,968.30 1023.40,968.30 1060.15,968.30 1096.90,968.30 1133.65,968.30 1170.40,968.30 1207.15,968.30 1243.90,968.30 1280.65,968.30" fill="none" stroke="#ec6d80" stroke-width="1.8" stroke-linejoin="round" stroke-linecap="butt"/>
</g>
<line x1="1369.1" y1="968.5" x2="1953.6" y2="968.5" stroke="#ececec" stroke-width="1" stroke-dasharray="4.5 4.5"/>
<text x="1359.8" y="970.8" text-anchor="end" font-size="12" fill="#9ba2af">0</text>
<line x1="1369.1" y1="919.5" x2="1953.6" y2="919.5" stroke="#ececec" stroke-width="1" stroke-dasharray="4.5 4.5"/>
<text x="1359.8" y="922.2" text-anchor="end" font-size="12" fill="#9ba2af">0.2</text>
<line x1="1369.1" y1="871.5" x2="1953.6" y2="871.5" stroke="#ececec" stroke-width="1" stroke-dasharray="4.5 4.5"/>
<text x="1359.8" y="873.6" text-anchor="end" font-size="12" fill="#9ba2af">0.4</text>
<line x1="1369.1" y1="822.5" x2="1953.6" y2="822.5" stroke="#ececec" stroke-width="1" stroke-dasharray="4.5 4.5"/>
<text x="1359.8" y="824.9" text-anchor="end" font-size="12" fill="#9ba2af">0.6</text>
<line x1="1369.1" y1="773.5" x2="1953.6" y2="773.5" stroke="#ececec" stroke-width="1" stroke-dasharray="4.5 4.5"/>
<text x="1359.8" y="776.3" text-anchor="end" font-size="12" fill="#9ba2af">0.8</text>
<line x1="1369.1" y1="725.5" x2="1953.6" y2="725.5" stroke="#ececec" stroke-width="1" stroke-dasharray="4.5 4.5"/>
<text x="1359.8" y="727.7" text-anchor="end" font-size="12" fill="#9ba2af">1</text>
<line x1="1387.4" y1="968.3" x2="1387.4" y2="973.3" stroke="#e3e3e3" stroke-width="1"/>
<text x="1387.4" y="986.1" text-anchor="middle" font-size="12" fill="#9ba2af">14:46</text>
<text x="1387.4" y="999.3" text-anchor="middle" font-size="12" fill="#9ba2af">02-02</text>
<line x1="1460.5" y1="968.3" x2="1460.5" y2="973.3" stroke="#e3e3e3" stroke-width="1"/>
<text x="1460.5" y="986.1" text-anchor="middle" font-size="12" fill="#9ba2af">14:48</text>
<text x="1460.5" y="999.3" text-anchor="middle" font-size="12" fill="#9ba2af">02-02</text>
<line x1="1533.5" y1="968.3" x2="1533.5" y2="973.3" stroke="#e3e3e3" stroke-width="1"/>
<text x="1533.5" y="986.1" text-anchor="middle" font-size="12" fill="#9ba2af">14:50</text>
<text x="1533.5" y="999.3" text-anchor="middle" font-size="12" fill="#9ba2af">02-02</text>
<line x1="1606.6" y1="968.3" x2="1606.6" y2="973.3" stroke="#e3e3e3" stroke-width="1"/>
<text x="1606.6" y="986.1" text-anchor="middle" font-size="12" fill="#9ba2af">14:52</text>
<text x="1606.6" y="999.3" text-anchor="middle" font-size="12" fill="#9ba2af">02-02</text>
<line x1="1679.6" y1="968.3" x2="1679.6" y2="973.3" stroke="#e3e3e3" stroke-width="1"/>
<text x="1679.6" y="986.1" text-anchor="middle" font-size="12" fill="#9ba2af">14:54</text>
<text x="1679.6" y="999.3" text-anchor="middle" font-size="12" fill="#9ba2af">02-02</text>
<line x1="1752.7" y1="968.3" x2="1752.7" y2="973.3" stroke="#e3e3e3" stroke-width="1"/>
<text x="1752.7" y="986.1" text-anchor="middle" font-size="12" fill="#9ba2af">14:56</text>
<text x="1752.7" y="999.3" text-anchor="middle" font-size="12" fill="#9ba2af">02-02</text>
<line x1="1825.8" y1="968.3" x2="1825.8" y2="973.3" stroke="#e3e3e3" stroke-width="1"/>
<text x="1825.8" y="986.1" text-anchor="middle" font-size="12" fill="#9ba2af">14:58</text>
<text x="1825.8" y="999.3" text-anchor="middle" font-size="12" fill="#9ba2af">02-02</text>
<line x1="1898.8" y1="968.3" x2="1898.8" y2="973.3" stroke="#e3e3e3" stroke-width="1"/>
<text x="1898.8" y="986.1" text-anchor="middle" font-size="12" fill="#9ba2af">15:00</text>
<text x="1898.8" y="999.3" text-anchor="middle" font-size="12" fill="#9ba2af">02-02</text>
<clipPath id="c1387_968"><rect x="1359.1" y="715.2" width="604.5" height="253.4"/></clipPath><g clip-path="url(#c1387_968)">
<polyline points="1387.40,968.30 1423.93,968.30 1460.46,968.30 1496.99,968.30 1533.52,968.30 1570.05,968.30 1606.58,968.30 1643.11,968.30 1679.64,968.30 1716.17,968.30 1752.70,968.30 1789.23,968.30 1825.76,968.30 1862.29,968.30 1898.82,968.30 1935.35,968.30" fill="none" stroke="#a3ade6" stroke-width="1.8" stroke-linejoin="round" stroke-linecap="butt"/>
</g>
<line x1="87.0" y1="1358.5" x2="643.2" y2="1358.5" stroke="#ececec" stroke-width="1" stroke-dasharray="4.5 4.5"/>
<text x="77.7" y="1360.8" text-anchor="end" font-size="12" fill="#9ba2af">0</text>
<line x1="87.0" y1="1317.5" x2="643.2" y2="1317.5" stroke="#ececec" stroke-width="1" stroke-dasharray="4.5 4.5"/>
<text x="77.7" y="1320.3" text-anchor="end" font-size="12" fill="#9ba2af">30,000</text>
<line x1="87.0" y1="1277.5" x2="643.2" y2="1277.5" stroke="#ececec" stroke-width="1" stroke-dasharray="4.5 4.5"/>
<text x="77.7" y="1279.8" text-anchor="end" font-size="12" fill="#9ba2af">60,000</text>
<line x1="87.0" y1="1236.5" x2="643.2" y2="1236.5" stroke="#ececec" stroke-width="1" stroke-dasharray="4.5 4.5"/>
<text x="77.7" y="1239.2" text-anchor="end" font-size="12" fill="#9ba2af">90,000</text>
<line x1="87.0" y1="1196.5" x2="643.2" y2="1196.5" stroke="#ececec" stroke-width="1" stroke-dasharray="4.5 4.5"/>
<text x="77.7" y="1198.7" text-anchor="end" font-size="12" fill="#9ba2af">120,000</text>
<line x1="87.0" y1="1155.5" x2="643.2" y2="1155.5" stroke="#ececec" stroke-width="1" stroke-dasharray="4.5 4.5"/>
<text x="77.7" y="1158.2" text-anchor="end" font-size="12" fill="#9ba2af">150,000</text>
<line x1="87.0" y1="1115.5" x2="643.2" y2="1115.5" stroke="#ececec" stroke-width="1" stroke-dasharray="4.5 4.5"/>
<text x="77.7" y="1117.7" text-anchor="end" font-size="12" fill="#9ba2af">180,000</text>
<line x1="104.4" y1="1358.3" x2="104.4" y2="1363.3" stroke="#e3e3e3" stroke-width="1"/>
<text x="104.4" y="1376.1" text-anchor="middle" font-size="12" fill="#9ba2af">14:46</text>
<text x="104.4" y="1389.3" text-anchor="middle" font-size="12" fill="#9ba2af">02-02</text>
<line x1="173.9" y1="1358.3" x2="173.9" y2="1363.3" stroke="#e3e3e3" stroke-width="1"/>
<text x="173.9" y="1376.1" text-anchor="middle" font-size="12" fill="#9ba2af">14:48</text>
<text x="173.9" y="1389.3" text-anchor="middle" font-size="12" fill="#9ba2af">02-02</text>
<line x1="243.4" y1="1358.3" x2="243.4" y2="1363.3" stroke="#e3e3e3" stroke-width="1"/>
<text x="243.4" y="1376.1" text-anchor="middle" font-size="12" fill="#9ba2af">14:50</text>
<text x="243.4" y="1389.3" text-anchor="middle" font-size="12" fill="#9ba2af">02-02</text>
<line x1="313.0" y1="1358.3" x2="313.0" y2="1363.3" stroke="#e3e3e3" stroke-width="1"/>
<text x="313.0" y="1376.1" text-anchor="middle" font-size="12" fill="#9ba2af">14:52</text>
<text x="313.0" y="1389.3" text-anchor="middle" font-size="12" fill="#9ba2af">02-02</text>
<line x1="382.5" y1="1358.3" x2="382.5" y2="1363.3" stroke="#e3e3e3" stroke-width="1"/>
<text x="382.5" y="1376.1" text-anchor="middle" font-size="12" fill="#9ba2af">14:54</text>
<text x="382.5" y="1389.3" text-anchor="middle" font-size="12" fill="#9ba2af">02-02</text>
<line x1="452.0" y1="1358.3" x2="452.0" y2="1363.3" stroke="#e3e3e3" stroke-width="1"/>
<text x="452.0" y="1376.1" text-anchor="middle" font-size="12" fill="#9ba2af">14:56</text>
<text x="452.0" y="1389.3" text-anchor="middle" font-size="12" fill="#9ba2af">02-02</text>
<line x1="521.5" y1="1358.3" x2="521.5" y2="1363.3" stroke="#e3e3e3" stroke-width="1"/>
<text x="521.5" y="1376.1" text-anchor="middle" font-size="12" fill="#9ba2af">14:58</text>
<text x="521.5" y="1389.3" text-anchor="middle" font-size="12" fill="#9ba2af">02-02</text>
<line x1="591.0" y1="1358.3" x2="591.0" y2="1363.3" stroke="#e3e3e3" stroke-width="1"/>
<text x="591.0" y="1376.1" text-anchor="middle" font-size="12" fill="#9ba2af">15:00</text>
<text x="591.0" y="1389.3" text-anchor="middle" font-size="12" fill="#9ba2af">02-02</text>
<clipPath id="c104_1358"><rect x="77.0" y="1105.2" width="576.2" height="253.4"/></clipPath><g clip-path="url(#c104_1358)">
<polygon points="104.40,1358.3 104.40,1206.43 139.16,1206.40 173.92,1206.38 208.68,1206.35 243.44,1206.32 278.20,1206.29 312.96,1206.27 347.72,1206.24 382.48,1206.21 417.24,1206.19 452.00,1206.16 486.76,1206.13 521.52,1206.11 556.28,1206.08 591.04,1206.05 625.80,1204.67 625.80,1358.3" fill="#ec6d80" fill-opacity="0.4"/>
<polygon points="104.40,1358.3 104.40,1120.94 139.16,1120.86 173.92,1120.78 208.68,1120.70 243.44,1120.62 278.20,1120.53 312.96,1120.45 347.72,1120.37 382.48,1120.29 417.24,1120.21 452.00,1120.13 486.76,1120.05 521.52,1119.97 556.28,1119.89 591.04,1119.81 625.80,1118.64 625.80,1358.3" fill="#a3ade6" fill-opacity="0.4"/>
<polyline points="104.40,1206.43 139.16,1206.40 173.92,1206.38 208.68,1206.35 243.44,1206.32 278.20,1206.29 312.96,1206.27 347.72,1206.24 382.48,1206.21 417.24,1206.19 452.00,1206.16 486.76,1206.13 521.52,1206.11 556.28,1206.08 591.04,1206.05 625.80,1204.67" fill="none" stroke="#ec6d80" stroke-width="1.8" stroke-linejoin="round" stroke-linecap="butt"/>
<polyline points="104.40,1120.94 139.16,1120.86 173.92,1120.78 208.68,1120.70 243.44,1120.62 278.20,1120.53 312.96,1120.45 347.72,1120.37 382.48,1120.29 417.24,1120.21 452.00,1120.13 486.76,1120.05 521.52,1119.97 556.28,1119.89 591.04,1119.81 625.80,1118.64" fill="none" stroke="#a3ade6" stroke-width="1.8" stroke-linejoin="round" stroke-linecap="butt"/>
</g>
<line x1="728.7" y1="1358.5" x2="1298.5" y2="1358.5" stroke="#ececec" stroke-width="1" stroke-dasharray="4.5 4.5"/>
<text x="719.4" y="1360.8" text-anchor="end" font-size="12" fill="#9ba2af">0</text>
<line x1="728.7" y1="1309.5" x2="1298.5" y2="1309.5" stroke="#ececec" stroke-width="1" stroke-dasharray="4.5 4.5"/>
<text x="719.4" y="1312.2" text-anchor="end" font-size="12" fill="#9ba2af">200</text>
<line x1="728.7" y1="1261.5" x2="1298.5" y2="1261.5" stroke="#ececec" stroke-width="1" stroke-dasharray="4.5 4.5"/>
<text x="719.4" y="1263.6" text-anchor="end" font-size="12" fill="#9ba2af">400</text>
<line x1="728.7" y1="1212.5" x2="1298.5" y2="1212.5" stroke="#ececec" stroke-width="1" stroke-dasharray="4.5 4.5"/>
<text x="719.4" y="1214.9" text-anchor="end" font-size="12" fill="#9ba2af">600</text>
<line x1="728.7" y1="1163.5" x2="1298.5" y2="1163.5" stroke="#ececec" stroke-width="1" stroke-dasharray="4.5 4.5"/>
<text x="719.4" y="1166.3" text-anchor="end" font-size="12" fill="#9ba2af">800</text>
<line x1="728.7" y1="1115.5" x2="1298.5" y2="1115.5" stroke="#ececec" stroke-width="1" stroke-dasharray="4.5 4.5"/>
<text x="719.4" y="1117.7" text-anchor="end" font-size="12" fill="#9ba2af">1,000</text>
<line x1="746.5" y1="1358.3" x2="746.5" y2="1363.3" stroke="#e3e3e3" stroke-width="1"/>
<text x="746.5" y="1376.1" text-anchor="middle" font-size="12" fill="#9ba2af">14:46</text>
<text x="746.5" y="1389.3" text-anchor="middle" font-size="12" fill="#9ba2af">02-02</text>
<line x1="817.7" y1="1358.3" x2="817.7" y2="1363.3" stroke="#e3e3e3" stroke-width="1"/>
<text x="817.7" y="1376.1" text-anchor="middle" font-size="12" fill="#9ba2af">14:48</text>
<text x="817.7" y="1389.3" text-anchor="middle" font-size="12" fill="#9ba2af">02-02</text>
<line x1="888.9" y1="1358.3" x2="888.9" y2="1363.3" stroke="#e3e3e3" stroke-width="1"/>
<text x="888.9" y="1376.1" text-anchor="middle" font-size="12" fill="#9ba2af">14:50</text>
<text x="888.9" y="1389.3" text-anchor="middle" font-size="12" fill="#9ba2af">02-02</text>
<line x1="960.2" y1="1358.3" x2="960.2" y2="1363.3" stroke="#e3e3e3" stroke-width="1"/>
<text x="960.2" y="1376.1" text-anchor="middle" font-size="12" fill="#9ba2af">14:52</text>
<text x="960.2" y="1389.3" text-anchor="middle" font-size="12" fill="#9ba2af">02-02</text>
<line x1="1031.4" y1="1358.3" x2="1031.4" y2="1363.3" stroke="#e3e3e3" stroke-width="1"/>
<text x="1031.4" y="1376.1" text-anchor="middle" font-size="12" fill="#9ba2af">14:54</text>
<text x="1031.4" y="1389.3" text-anchor="middle" font-size="12" fill="#9ba2af">02-02</text>
<line x1="1102.6" y1="1358.3" x2="1102.6" y2="1363.3" stroke="#e3e3e3" stroke-width="1"/>
<text x="1102.6" y="1376.1" text-anchor="middle" font-size="12" fill="#9ba2af">14:56</text>
<text x="1102.6" y="1389.3" text-anchor="middle" font-size="12" fill="#9ba2af">02-02</text>
<line x1="1173.8" y1="1358.3" x2="1173.8" y2="1363.3" stroke="#e3e3e3" stroke-width="1"/>
<text x="1173.8" y="1376.1" text-anchor="middle" font-size="12" fill="#9ba2af">14:58</text>
<text x="1173.8" y="1389.3" text-anchor="middle" font-size="12" fill="#9ba2af">02-02</text>
<line x1="1245.0" y1="1358.3" x2="1245.0" y2="1363.3" stroke="#e3e3e3" stroke-width="1"/>
<text x="1245.0" y="1376.1" text-anchor="middle" font-size="12" fill="#9ba2af">15:00</text>
<text x="1245.0" y="1389.3" text-anchor="middle" font-size="12" fill="#9ba2af">02-02</text>
<clipPath id="c746_1358"><rect x="718.7" y="1105.2" width="589.8" height="253.4"/></clipPath><g clip-path="url(#c746_1358)">
<polyline points="746.50,1153.85 782.11,1154.83 817.72,1156.53 853.33,1150.45 888.94,1157.50 924.55,1156.53 960.16,1154.34 995.77,1158.23 1031.38,1153.12 1066.99,1151.42 1102.60,1154.34 1138.21,1153.85 1173.82,1155.31 1209.43,1151.66 1245.04,1154.34 1280.65,1144.62" fill="none" stroke="#66bcb9" stroke-width="1.8" stroke-linejoin="round" stroke-linecap="butt"/>
</g>
<line x1="1384.1" y1="1356.5" x2="1953.1" y2="1356.5" stroke="#ececec" stroke-width="1" stroke-dasharray="4.5 4.5"/>
<text x="1374.8" y="1359.2" text-anchor="end" font-size="12" fill="#9ba2af">0</text>
<line x1="1384.1" y1="1285.5" x2="1953.1" y2="1285.5" stroke="#ececec" stroke-width="1" stroke-dasharray="4.5 4.5"/>
<text x="1374.8" y="1287.8" text-anchor="end" font-size="12" fill="#9ba2af">1,000</text>
<line x1="1384.1" y1="1213.5" x2="1953.1" y2="1213.5" stroke="#ececec" stroke-width="1" stroke-dasharray="4.5 4.5"/>
<text x="1374.8" y="1216.3" text-anchor="end" font-size="12" fill="#9ba2af">2,000</text>
<line x1="1384.1" y1="1142.5" x2="1953.1" y2="1142.5" stroke="#ececec" stroke-width="1" stroke-dasharray="4.5 4.5"/>
<text x="1374.8" y="1144.9" text-anchor="end" font-size="12" fill="#9ba2af">3,000</text>
<line x1="1384.1" y1="1071.5" x2="1953.1" y2="1071.5" stroke="#ececec" stroke-width="1" stroke-dasharray="4.5 4.5"/>
<text x="1374.8" y="1073.5" text-anchor="end" font-size="12" fill="#9ba2af">4,000</text>
<line x1="1401.9" y1="1356.7" x2="1401.9" y2="1361.7" stroke="#e3e3e3" stroke-width="1"/>
<text x="1401.9" y="1374.5" text-anchor="middle" font-size="12" fill="#9ba2af">14:46</text>
<text x="1401.9" y="1387.7" text-anchor="middle" font-size="12" fill="#9ba2af">02-02</text>
<line x1="1473.0" y1="1356.7" x2="1473.0" y2="1361.7" stroke="#e3e3e3" stroke-width="1"/>
<text x="1473.0" y="1374.5" text-anchor="middle" font-size="12" fill="#9ba2af">14:48</text>
<text x="1473.0" y="1387.7" text-anchor="middle" font-size="12" fill="#9ba2af">02-02</text>
<line x1="1544.1" y1="1356.7" x2="1544.1" y2="1361.7" stroke="#e3e3e3" stroke-width="1"/>
<text x="1544.1" y="1374.5" text-anchor="middle" font-size="12" fill="#9ba2af">14:50</text>
<text x="1544.1" y="1387.7" text-anchor="middle" font-size="12" fill="#9ba2af">02-02</text>
<line x1="1615.3" y1="1356.7" x2="1615.3" y2="1361.7" stroke="#e3e3e3" stroke-width="1"/>
<text x="1615.3" y="1374.5" text-anchor="middle" font-size="12" fill="#9ba2af">14:52</text>
<text x="1615.3" y="1387.7" text-anchor="middle" font-size="12" fill="#9ba2af">02-02</text>
<line x1="1686.4" y1="1356.7" x2="1686.4" y2="1361.7" stroke="#e3e3e3" stroke-width="1"/>
<text x="1686.4" y="1374.5" text-anchor="middle" font-size="12" fill="#9ba2af">14:54</text>
<text x="1686.4" y="1387.7" text-anchor="middle" font-size="12" fill="#9ba2af">02-02</text>
<line x1="1757.5" y1="1356.7" x2="1757.5" y2="1361.7" stroke="#e3e3e3" stroke-width="1"/>
<text x="1757.5" y="1374.5" text-anchor="middle" font-size="12" fill="#9ba2af">14:56</text>
<text x="1757.5" y="1387.7" text-anchor="middle" font-size="12" fill="#9ba2af">02-02</text>
<line x1="1828.6" y1="1356.7" x2="1828.6" y2="1361.7" stroke="#e3e3e3" stroke-width="1"/>
<text x="1828.6" y="1374.5" text-anchor="middle" font-size="12" fill="#9ba2af">14:58</text>
<text x="1828.6" y="1387.7" text-anchor="middle" font-size="12" fill="#9ba2af">02-02</text>
<line x1="1899.7" y1="1356.7" x2="1899.7" y2="1361.7" stroke="#e3e3e3" stroke-width="1"/>
<text x="1899.7" y="1374.5" text-anchor="middle" font-size="12" fill="#9ba2af">15:00</text>
<text x="1899.7" y="1387.7" text-anchor="middle" font-size="12" fill="#9ba2af">02-02</text>
<clipPath id="c1401_1356"><rect x="1374.1" y="1061.0" width="589.0" height="296.0"/></clipPath><g clip-path="url(#c1401_1356)">
<polyline points="1401.90,1102.07 1437.46,1102.43 1473.02,1103.14 1508.58,1101.71 1544.14,1102.78 1579.70,1102.78 1615.26,1102.07 1650.82,1102.78 1686.38,1102.07 1721.94,1103.14 1757.50,1101.36 1793.06,1101.71 1828.62,1101.00 1864.18,1102.07 1899.74,1103.50 1935.30,1100.64" fill="none" stroke="#4699e4" stroke-width="1.8" stroke-linejoin="round" stroke-linecap="butt"/>
</g>
</svg>
<div class="r" style="left:22px;top:234.1px;width:644.25px;height:31px;background:#f3f4f8;border-radius:3px;"></div>
<div class="t" style="left:33.90px;top:241.73px;font-size:14.5px;line-height:14.5px;color:#9ba3b1;">CPU Average Used ( % )</div>
<svg class="r" style="left:640.25px;top:242.30px" width="12" height="15" viewBox="0 0 12 15"><path d="M3 6.2 V4 A3 3 0 0 1 9 4 V6.2" stroke="#959cab" stroke-width="1.8" fill="none"/><rect x="1.2" y="6" width="9.6" height="7.7" rx="2" stroke="#959cab" stroke-width="1.8" fill="none"/></svg>
<div class="lg" style="left:39.00px;top:279.00px;"><span class="li"><i style="background:#4699e4"></i>idle</span><span class="li"><i style="background:#66bcb9"></i>iowait</span><span class="li"><i style="background:#f6c862"></i>irq</span><span class="li"><i style="background:#ec6d80"></i>nice</span><span class="li"><i style="background:#a3ade6"></i>softirq</span><span class="li"><i style="background:#c23531"></i>steal</span><span class="li"><i style="background:#2f4554"></i>system</span><span class="li"><i style="background:#61a0a8"></i>user</span></div>
<div class="r" style="left:677.75px;top:234.1px;width:644.25px;height:31px;background:#f3f4f8;border-radius:3px;"></div>
<div class="t" style="left:689.65px;top:241.73px;font-size:14.5px;line-height:14.5px;color:#9ba3b1;">CPU Load</div>
<svg class="r" style="left:1296.00px;top:242.30px" width="12" height="15" viewBox="0 0 12 15"><path d="M3 6.2 V4 A3 3 0 0 1 9 4 V6.2" stroke="#959cab" stroke-width="1.8" fill="none"/><rect x="1.2" y="6" width="9.6" height="7.7" rx="2" stroke="#959cab" stroke-width="1.8" fill="none"/></svg>
<div class="lg" style="left:694.25px;top:279.00px;"><span class="li"><i style="background:#4699e4"></i>meter_vm_cpu_load1</span><span class="li"><i style="background:#66bcb9"></i>meter_vm_cpu_load5</span><span class="li"><i style="background:#f6c862"></i>meter_vm_cpu_load15</span></div>
<div class="r" style="left:1332.75px;top:234.1px;width:644.25px;height:31px;background:#f3f4f8;border-radius:3px;"></div>
<div class="t" style="left:1344.65px;top:241.73px;font-size:14.5px;line-height:14.5px;color:#9ba3b1;">Memory RAM ( MB )</div>
<svg class="r" style="left:1951.00px;top:242.30px" width="12" height="15" viewBox="0 0 12 15"><path d="M3 6.2 V4 A3 3 0 0 1 9 4 V6.2" stroke="#959cab" stroke-width="1.8" fill="none"/><rect x="1.2" y="6" width="9.6" height="7.7" rx="2" stroke="#959cab" stroke-width="1.8" fill="none"/></svg>
<div class="lg" style="left:1349.25px;top:279.00px;"><span class="li"><i style="background:#4699e4"></i>meter_vm_memory_total</span><span class="li"><i style="background:#66bcb9"></i>meter_vm_memory_available</span><span class="li"><i style="background:#f6c862"></i>meter_vm_memory_used</span></div>
<div class="r" style="left:22px;top:624.5px;width:644.25px;height:31px;background:#f3f4f8;border-radius:3px;"></div>
<div class="t" style="left:33.90px;top:632.13px;font-size:14.5px;line-height:14.5px;color:#9ba3b1;">Memory Swap ( MB )</div>
<svg class="r" style="left:640.25px;top:632.70px" width="12" height="15" viewBox="0 0 12 15"><path d="M3 6.2 V4 A3 3 0 0 1 9 4 V6.2" stroke="#959cab" stroke-width="1.8" fill="none"/><rect x="1.2" y="6" width="9.6" height="7.7" rx="2" stroke="#959cab" stroke-width="1.8" fill="none"/></svg>
<div class="lg" style="left:39.00px;top:669.40px;"><span class="li"><i style="background:#ec6d80"></i>meter_vm_memory_swap_free</span><span class="li"><i style="background:#a3ade6"></i>meter_vm_memory_swap_total</span></div>
<div class="r" style="left:677.75px;top:624.5px;width:644.25px;height:31px;background:#f3f4f8;border-radius:3px;"></div>
<div class="t" style="left:689.65px;top:632.13px;font-size:14.5px;line-height:14.5px;color:#9ba3b1;">File System Mountpoint Usage ( % )</div>
<svg class="r" style="left:1296.00px;top:632.70px" width="12" height="15" viewBox="0 0 12 15"><path d="M3 6.2 V4 A3 3 0 0 1 9 4 V6.2" stroke="#959cab" stroke-width="1.8" fill="none"/><rect x="1.2" y="6" width="9.6" height="7.7" rx="2" stroke="#959cab" stroke-width="1.8" fill="none"/></svg>
<div class="lg" style="left:694.25px;top:669.40px;"><span class="li"><i style="background:#4699e4"></i>/</span><span class="li"><i style="background:#66bcb9"></i>/boot/efi</span><span class="li"><i style="background:#f6c862"></i>/run</span><span class="li"><i style="background:#ec6d80"></i>/run/user/1008</span></div>
<div class="r" style="left:1332.75px;top:624.5px;width:644.25px;height:31px;background:#f3f4f8;border-radius:3px;"></div>
<div class="t" style="left:1344.65px;top:632.13px;font-size:14.5px;line-height:14.5px;color:#9ba3b1;">Disk R/W ( KB/s )</div>
<svg class="r" style="left:1951.00px;top:632.70px" width="12" height="15" viewBox="0 0 12 15"><path d="M3 6.2 V4 A3 3 0 0 1 9 4 V6.2" stroke="#959cab" stroke-width="1.8" fill="none"/><rect x="1.2" y="6" width="9.6" height="7.7" rx="2" stroke="#959cab" stroke-width="1.8" fill="none"/></svg>
<div class="lg" style="left:1349.25px;top:669.40px;"><span class="li"><i style="background:#ec6d80"></i>meter_vm_disk_read</span><span class="li"><i style="background:#a3ade6"></i>meter_vm_disk_written</span></div>
<div class="r" style="left:22px;top:1014.9px;width:644.25px;height:31px;background:#f3f4f8;border-radius:3px;"></div>
<div class="t" style="left:33.90px;top:1022.53px;font-size:14.5px;line-height:14.5px;color:#9ba3b1;">Network Bandwidth Usage ( KB/s )</div>
<svg class="r" style="left:640.25px;top:1023.10px" width="12" height="15" viewBox="0 0 12 15"><path d="M3 6.2 V4 A3 3 0 0 1 9 4 V6.2" stroke="#959cab" stroke-width="1.8" fill="none"/><rect x="1.2" y="6" width="9.6" height="7.7" rx="2" stroke="#959cab" stroke-width="1.8" fill="none"/></svg>
<div class="lg" style="left:39.00px;top:1059.80px;"><span class="li"><i style="background:#ec6d80"></i>meter_vm_network_receive</span><span class="li"><i style="background:#a3ade6"></i>meter_vm_network_transmit</span></div>
<div class="r" style="left:677.75px;top:1014.9px;width:644.25px;height:31px;background:#f3f4f8;border-radius:3px;"></div>
<div class="t" style="left:689.65px;top:1022.53px;font-size:14.5px;line-height:14.5px;color:#9ba3b1;">Network Status</div>
<svg class="r" style="left:1296.00px;top:1023.10px" width="12" height="15" viewBox="0 0 12 15"><path d="M3 6.2 V4 A3 3 0 0 1 9 4 V6.2" stroke="#959cab" stroke-width="1.8" fill="none"/><rect x="1.2" y="6" width="9.6" height="7.7" rx="2" stroke="#959cab" stroke-width="1.8" fill="none"/></svg>
<div class="lg" style="left:694.25px;top:1059.80px;width:546.7px;overflow:hidden;"><span class="li"><i style="background:#4699e4"></i>meter_vm_tcp_curr_estab</span><span class="li"><i style="background:#66bcb9"></i>meter_vm_tcp_tw</span><span class="li"><i style="background:#f6c862"></i>meter_vm_tcp_alloc</span><span class="li"><i style="background:#ec6d80"></i>meter_vm_tcp_inuse</span></div>
<div class="r" style="left:1332.75px;top:1014.9px;width:644.25px;height:31px;background:#f3f4f8;border-radius:3px;"></div>
<div class="t" style="left:1344.65px;top:1022.53px;font-size:14.5px;line-height:14.5px;color:#9ba3b1;">Filefd Allocated</div>
<svg class="r" style="left:1951.00px;top:1023.10px" width="12" height="15" viewBox="0 0 12 15"><path d="M3 6.2 V4 A3 3 0 0 1 9 4 V6.2" stroke="#959cab" stroke-width="1.8" fill="none"/><rect x="1.2" y="6" width="9.6" height="7.7" rx="2" stroke="#959cab" stroke-width="1.8" fill="none"/></svg>
<svg class="r" style="left:1251px;top:1059px" width="54" height="18" viewBox="0 0 54 18"><path d="M11 0.7 V16.8 L1 8.75 Z" fill="#aaaaaa"/><path d="M42.7 0.7 V16.8 L52.7 8.75 Z" fill="#2f4554"/></svg>
<div class="t" style="left:1269.5px;top:1060.7px;font-size:13.33px;line-height:13.33px;color:#333;">1/2</div>
<div class="r" style="left:0;top:1216px;width:1999px;height:33px;background:#fff;border-top:1px solid #e4e4e4;"></div>
<div class="t" style="left:1449px;top:1224.6px;font-size:14.3px;line-height:14.3px;color:#3b4353;font-family:'Liberation Mono',monospace;transform:scaleX(0.845);transform-origin:0 0;">2021-02-02 14:46 ~ 2021-02-02 15:01</div>
<div class="t" style="left:1767px;top:1225.7px;font-size:13.3px;line-height:13.3px;color:#3d4250;">En</div>
<div class="t" style="left:1800px;top:1225.7px;font-size:13.3px;line-height:13.3px;color:#3d4250;">Server Zone UTC + 0</div>
<svg class="r" style="left:1965px;top:1224px" width="14" height="18" viewBox="0 0 14 18"><rect x="1" y="1" width="12" height="16" rx="3" fill="#fff" stroke="#dddddd" stroke-width="0.8"/><path d="M4.5 6.5 L7 4 L9.5 6.5" stroke="#333" stroke-width="1.1" fill="none"/><path d="M4.5 11.5 L7 14 L9.5 11.5" stroke="#333" stroke-width="1.1" fill="none"/></svg>
</body></html>
